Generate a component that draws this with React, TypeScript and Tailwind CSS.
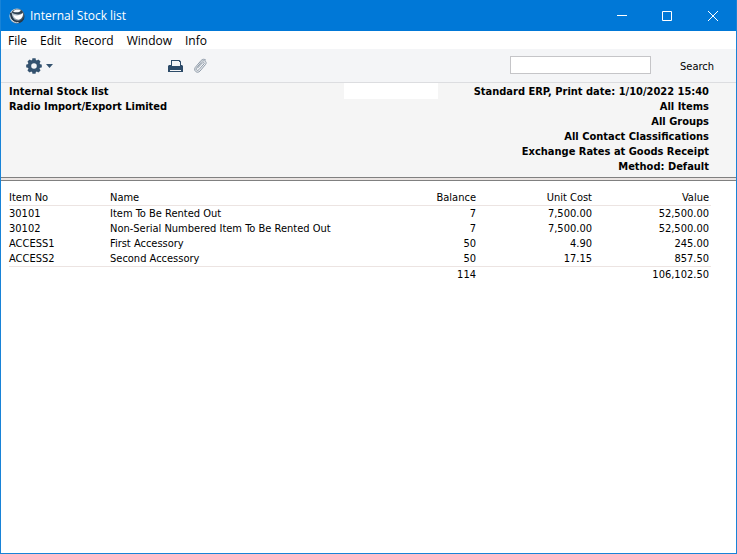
import React from "react";

const menus = ["File", "Edit", "Record", "Window", "Info"];

const filters = [
  "Standard ERP, Print date: 1/10/2022 15:40",
  "All Items",
  "All Groups",
  "All Contact Classifications",
  "Exchange Rates at Goods Receipt",
  "Method: Default",
];

const rows = [
  ["30101", "Item To Be Rented Out", "7", "7,500.00", "52,500.00"],
  ["30102", "Non-Serial Numbered Item To Be Rented Out", "7", "7,500.00", "52,500.00"],
  ["ACCESS1", "First Accessory", "50", "4.90", "245.00"],
  ["ACCESS2", "Second Accessory", "50", "17.15", "857.50"],
];

function AppLogo() {
  return (
    <svg width="16" height="16" viewBox="0 0 16 16" aria-hidden="true">
      <defs>
        <linearGradient id="globe" x1="0" y1="0" x2="1" y2="0.6">
          <stop offset="0" stopColor="#e3e9ee" />
          <stop offset="0.5" stopColor="#a9b8c4" />
          <stop offset="1" stopColor="#2a3c4c" />
        </linearGradient>
      </defs>
      <circle cx="8" cy="8" r="7.6" fill="url(#globe)" />
      <path d="M1 5C.8 10 4 14.500 8.500 15.200 12 15 14.600 12.500 15.300 9.500 13 12.500 10 13.600 7.200 12.600 4.400 11.400 3 8.500 2.600 4.500Z" fill="#26394a" />
      <path d="M2.600 4.200C4 1.600 8 .3 11.600 1.800 13 2.600 13.800 3.400 14 4.400 11 6.600 5.500 7 2.600 4.200Z" fill="#2f4252" />
      <path d="M4 3.400C6 1.400 9.600 1 12 2.400 10.500 4.400 6.800 5 4 3.400Z" fill="#f5f7f9" />
      <path d="M4.200 7C7.500 8 11.800 7 14 5 14.300 8.600 12.400 11.400 9.400 11.800 6.800 11.600 4.800 9.600 4.200 7Z" fill="#fff" />
      <path d="M2.400 11.400C4 14 7 15 9.600 14.600" fill="none" stroke="#cfd9e1" strokeWidth="1" />
    </svg>
  );
}

function GearIcon() {
  return (
    <svg width="16" height="16" viewBox="0 0 16 16" aria-hidden="true">
      <g fill="#34526f">
        <path
          fillRule="evenodd"
          d="M8 1.800a6.200 6.200 0 1 0 0 12.400A6.200 6.200 0 0 0 8 1.800Zm0 3.400a2.800 2.800 0 1 1 0 5.600 2.800 2.800 0 0 1 0-5.600Z"
        />
        {[0, 45, 90, 135, 180, 225, 270, 315].map((a) => (
          <path key={a} transform={`rotate(${a} 8 8)`} d="M6 3 6.400.3Q8 0 9.600.3L10 3Z" />
        ))}
      </g>
    </svg>
  );
}

function PrinterIcon() {
  return (
    <svg width="16" height="14" viewBox="0 0 16 14" aria-hidden="true">
      <path
        fillRule="evenodd"
        fill="#2d4b69"
        d="M3 1h8.500L13 2.500V6h1l1 1v6H0V7l1-1h2ZM4 2v5h8V3h-1V2ZM2 11v1h11v-1Z"
      />
    </svg>
  );
}

function ClipIcon() {
  return (
    <svg width="15" height="16" viewBox="0 0 15 16" aria-hidden="true">
      <path
        d="M4.600 10 9.600 4.700C10.600 3.700 11.900 4.900 11 5.900L5.900 11.700C4.200 13.500 2.100 11.600 3.700 9.800L8.800 3.600C11 1.300 14.400 3.700 12.600 6.400L7 13C4.400 16 .2 12.900 2.200 9.500L8.200 2.400C9.500 1 11.500.9 12.700 2"
        fill="none"
        stroke="#8b98a6"
        strokeWidth="1"
        strokeLinecap="round"
      />
    </svg>
  );
}

export default function App() {
  return (
    <div className="flex min-h-screen flex-col border-x border-b border-[#1883d7] bg-white font-['DejaVu_Sans_Condensed','DejaVu_Sans',sans-serif] text-[11px] leading-[15px] text-black">
      <header className="flex h-[31px] items-center bg-[#0078d7] pl-2 text-white">
        <AppLogo />
        <h1 className="ml-[5px] flex-1 font-['Open_Sans',sans-serif] text-xs">Internal Stock list</h1>
        <button aria-label="Minimize" className="flex h-full w-[46px] items-center justify-center">
          <svg width="10" height="10" viewBox="0 0 10 10" stroke="#fff"><path d="M0 4.500h10" /></svg>
        </button>
        <button aria-label="Maximize" className="flex h-full w-11 items-center justify-center">
          <svg width="10" height="10" viewBox="0 0 10 10" stroke="#fff" fill="none"><path d="M.5.500h9v9h-9Z" /></svg>
        </button>
        <button aria-label="Close" className="flex h-full w-[47px] items-center justify-center">
          <svg width="10" height="10" viewBox="0 0 10 10" stroke="#fff"><path d="m0 0 10 10M10 0 0 10" /></svg>
        </button>
      </header>

      <nav className="flex h-[18px] items-center gap-[13px] pt-[2px] pl-[7px] font-['Open_Sans',sans-serif] text-xs">
        {menus.map((m) => (
          <button key={m}>{m}</button>
        ))}
      </nav>

      <div className="flex h-[34px] items-center border-b border-[#dcdde0] bg-[#f4f5f7] pt-px pr-[22px] pl-[25px]">
        <button aria-label="Operations" className="flex items-center gap-1">
          <GearIcon />
          <svg width="7" height="4" viewBox="0 0 7 4" fill="#34526f" aria-hidden="true"><path d="M0 0h7L3.500 4Z" /></svg>
        </button>
        <button aria-label="Print" className="ml-[115px]"><PrinterIcon /></button>
        <button aria-label="Attachments" className="ml-[9px]"><ClipIcon /></button>
        <div className="flex-1" />
        <input aria-label="Search text" type="text" className="mb-[2px] h-[18px] w-[141px] border border-[#c5c5c8] bg-white px-1 outline-none" />
        <button className="ml-[29px] pt-px">Search</button>
      </div>

      <section className="flex bg-[#f5f5f5] pr-[27px] pb-[3px] pl-2 font-bold">
        <div className="flex-1 pt-px">
          <h2>Internal Stock list</h2>
          <p>Radio Import/Export Limited</p>
        </div>
        <div className="h-[16px] w-[94px] bg-white" />
        <div className="w-[271px] pt-px text-right whitespace-nowrap">
          {filters.map((f) => (
            <p key={f}>{f}</p>
          ))}
        </div>
      </section>
      <div className="h-[4px] border-y border-[#808080] bg-[#eae4e2]" />

      <main className="pt-[9px] pr-[25px] pl-2">
        <table className="w-full table-fixed border-collapse [&_td]:p-0 [&_th]:p-0 [&_th]:font-normal">
          <colgroup>
            <col className="w-[101px]" />
            <col />
            <col className="w-[100px]" />
            <col className="w-[116px]" />
            <col className="w-[119px]" />
          </colgroup>
          <thead>
            <tr className="border-b border-[#ece4e2]">
              <th className="text-left">Item No</th>
              <th className="text-left">Name</th>
              <th className="text-right">Balance</th>
              <th className="text-right">Unit Cost</th>
              <th className="text-right"><span className="pr-[2px]">Value</span></th>
            </tr>
          </thead>
          <tbody>
            {rows.map((r) => (
              <tr key={r[0]}>
                <td>{r[0]}</td>
                <td className="whitespace-nowrap">{r[1]}</td>
                <td className="text-right">{r[2]}</td>
                <td className="text-right">{r[3]}</td>
                <td className="text-right"><span className="pr-[2px]">{r[4]}</span></td>
              </tr>
            ))}
          </tbody>
          <tfoot>
            <tr className="border-t border-[#ece4e2]">
              <td />
              <td />
              <td className="text-right">114</td>
              <td />
              <td className="text-right"><span className="pr-[2px]">106,102.50</span></td>
            </tr>
          </tfoot>
        </table>
      </main>
    </div>
  );
}
